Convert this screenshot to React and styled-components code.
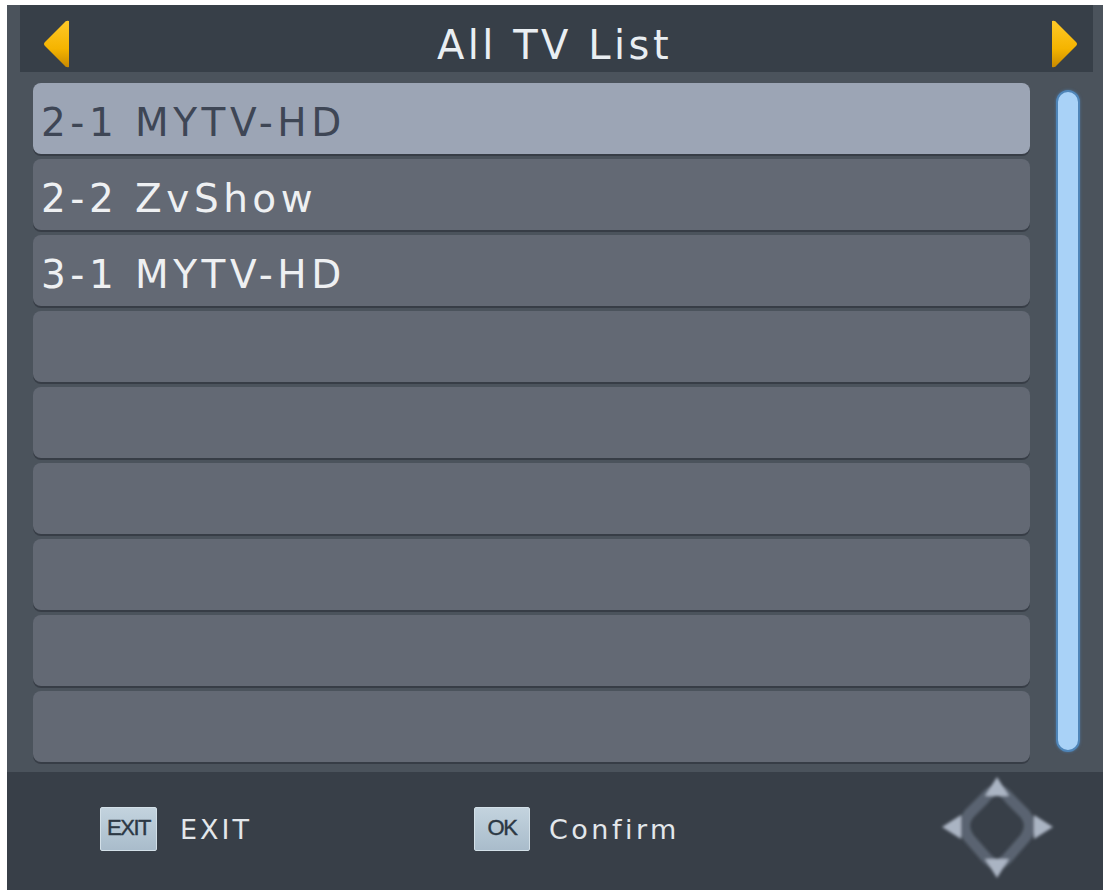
import React from "react";
import styled, { createGlobalStyle } from "styled-components";

const Global = createGlobalStyle`
  html, body { margin: 0; padding: 0; background: #ffffff; }
  body { font-family: "DejaVu Sans", "Liberation Sans", sans-serif; }
`;

const Screen = styled.div`
  margin: 5px 0 0 7px;
  width: 1096px;
  height: 885px;
  background: #4b535c;
  display: flex;
  flex-direction: column;
  overflow: hidden;
`;

const TitleBar = styled.div`
  margin-left: 13px;
  width: 1073px;
  height: 67px;
  flex: none;
  background: #373f48;
  display: flex;
  align-items: center;
  justify-content: space-between;
  padding: 10px 14px 0 22px;
  box-sizing: border-box;
`;

const Title = styled.h1`
  margin: 0 12px 0 0;
  font-size: 40px;
  font-weight: normal;
  letter-spacing: 3.5px;
  color: #e9eef2;
  line-height: 1;
  padding-top: 2px;
`;

const Body = styled.div`
  flex: 1;
  display: flex;
  align-items: flex-start;
  padding: 11px 0 0 26px;
  gap: 26px;
`;

const List = styled.ul`
  list-style: none;
  margin: 0;
  padding: 0;
  width: 997px;
  display: grid;
  grid-auto-rows: 71px;
  row-gap: 5px;
`;

const Row = styled.li`
  border-radius: 8px;
  background: ${(p) => (p.$selected ? "#9ca5b5" : "#636974")};
  color: ${(p) => (p.$selected ? "#3e4655" : "#eef0f2")};
  box-shadow: 0 2px 0 rgba(40, 44, 52, 0.55);
  display: flex;
  align-items: center;
  padding: 8px 0 0 8px;
  box-sizing: border-box;
  font-size: 39px;
  letter-spacing: 4.5px;
  white-space: nowrap;
`;

const ScrollBar = styled.div`
  margin-top: 7px;
  width: 24px;
  height: 662px;
  border-radius: 12px;
  background: #a9d2f7;
  box-sizing: border-box;
  border: 2px solid #4f85b8;
  box-shadow: 0 0 3px rgba(80, 140, 200, 0.6);
`;

const Footer = styled.div`
  height: 118px;
  flex: none;
  background: #383f48;
  display: flex;
  align-items: center;
  padding: 0 46px 4px 93px;
  box-sizing: border-box;
`;

const Hint = styled.div`
  display: flex;
  align-items: center;
  gap: ${(p) => p.$gap}px;
  width: ${(p) => (p.$width ? `${p.$width}px` : "auto")};
  flex: ${(p) => (p.$width ? "none" : "1")};
`;

const Key = styled.span`
  width: ${(p) => p.$w}px;
  height: 44px;
  box-sizing: border-box;
  background: linear-gradient(#c3d3de, #a9bccb);
  border: 1px solid #d3e0e8;
  border-radius: 2px;
  display: flex;
  align-items: center;
  justify-content: center;
  font-family: "Liberation Sans", "DejaVu Sans", sans-serif;
  font-size: 22px;
  letter-spacing: -1.5px;
  color: #2c3844;
  -webkit-text-stroke: 0.4px #2c3844;
  padding-bottom: 2px;
`;

const HintLabel = styled.span`
  font-size: ${(p) => p.$size}px;
  letter-spacing: ${(p) => p.$ls}px;
  color: #e3e7eb;
`;

const Arrow = ({ dir }) => (
  <svg width="30" height="50" viewBox="0 0 30 50">
    <defs>
      <linearGradient id={`ag-${dir}`} x1="0" y1="0" x2="0" y2="1">
        <stop offset="0" stopColor="#ffc928" />
        <stop offset="0.6" stopColor="#f5b400" />
        <stop offset="1" stopColor="#c98a00" />
      </linearGradient>
    </defs>
    {dir === "left" ? (
      <path d="M27 2 L27 48 Q24 49 22 46 L3 27 Q1 25 3 23 L22 4 Q24 1 27 2 Z" fill={`url(#ag-${dir})`} />
    ) : (
      <path d="M3 2 L3 48 Q6 49 8 46 L27 27 Q29 25 27 23 L8 4 Q6 1 3 2 Z" fill={`url(#ag-${dir})`} />
    )}
  </svg>
);

const DPad = () => (
  <svg width="120" height="110" viewBox="0 0 120 110">
    <defs>
      <filter id="soft" x="-10%" y="-10%" width="120%" height="120%">
        <feGaussianBlur stdDeviation="1.5" />
      </filter>
    </defs>
    <g filter="url(#soft)">
      <path
        d="M60 16 Q66 16 74 26 L88 40 Q97 52 88 64 L74 80 Q66 90 60 90 Q54 90 46 80 L32 64 Q23 52 32 40 L46 26 Q54 16 60 16 Z"
        fill="none"
        stroke="#5a6471"
        strokeWidth="11"
        strokeLinejoin="round"
      />
      <path d="M60 3 L72 22 L48 22 Z" fill="#aab4c3" />
      <path d="M60 104 L72 85 L48 85 Z" fill="#aab4c3" />
      <path d="M5 53 L24 41 L24 65 Z" fill="#aab4c3" />
      <path d="M116 53 L97 41 L97 65 Z" fill="#aab4c3" />
    </g>
  </svg>
);

const channels = ["2-1 MYTV-HD", "2-2 ZvShow", "3-1 MYTV-HD", "", "", "", "", "", ""];

export default function App() {
  return (
    <>
      <Global />
      <Screen>
        <TitleBar>
          <Arrow dir="left" />
          <Title>All TV List</Title>
          <Arrow dir="right" />
        </TitleBar>
        <Body>
          <List>
            {channels.map((name, i) => (
              <Row key={i} $selected={i === 0}>
                {name}
              </Row>
            ))}
          </List>
          <ScrollBar />
        </Body>
        <Footer>
          <Hint $width={374} $gap={23}>
            <Key $w={57}>EXIT</Key>
            <HintLabel $size={27} $ls={3}>EXIT</HintLabel>
          </Hint>
          <Hint $gap={19}>
            <Key $w={56}>OK</Key>
            <HintLabel $size={27} $ls={3.5}>Confirm</HintLabel>
          </Hint>
          <DPad />
        </Footer>
      </Screen>
    </>
  );
}
